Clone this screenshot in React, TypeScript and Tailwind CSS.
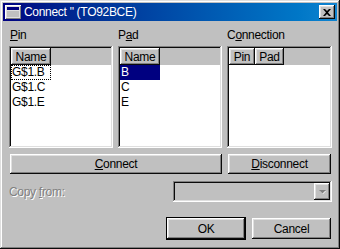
const font = "font-['Liberation_Sans',Arial,sans-serif] text-[12px] tracking-[-0.3px] text-black";

const raised =
  "bg-[#c0c0c0] shadow-[inset_-1px_-1px_#0a0a0a,inset_1px_1px_#ffffff,inset_-2px_-2px_#808080,inset_2px_2px_#dfdfdf]";
const sunken =
  "shadow-[inset_-1px_-1px_#ffffff,inset_1px_1px_#808080,inset_-2px_-2px_#dfdfdf,inset_2px_2px_#0a0a0a]";

function U({ children }: { children: React.ReactNode }) {
  return <span className="underline underline-offset-[1px]">{children}</span>;
}

function WinIcon() {
  return (
    <svg width="16" height="14" viewBox="0 0 16 14" className="shrink-0">
      <rect x="0" y="0" width="16" height="14" fill="#ffffff" />
      <rect x="1" y="1" width="15" height="13" fill="#808080" />
      <rect x="1" y="1" width="14" height="12" fill="#dfdfdf" />
      <rect x="2" y="2" width="12" height="3" fill="#000080" />
      <rect x="2" y="6" width="12" height="6" fill="#c0c0c0" />
    </svg>
  );
}

function CloseBtn() {
  return (
    <div className={`${raised} w-[16px] h-[14px] flex items-center justify-center`}>
      <svg width="8" height="7" viewBox="0 0 8 7">
        <path d="M0 0h2l2 2 2-2h2L5 3.5 8 7H6L4 5 2 7H0l3-3.5z" fill="#000" />
      </svg>
    </div>
  );
}

function Header({ w, children }: { w: number; children: React.ReactNode }) {
  return (
    <div
      className={`${raised} h-[17px] flex items-center justify-center shrink-0`}
      style={{ width: w }}
    >
      {children}
    </div>
  );
}

function ListBox({
  width,
  headers,
  children,
}: {
  width: number;
  headers: [string, number][];
  children?: React.ReactNode;
}) {
  return (
    <div className={`${sunken} bg-white h-[102px] p-[2px]`} style={{ width }}>
      <div className="flex bg-[#c0c0c0] h-[17px]">
        {headers.map(([h, w]) => (
          <Header key={h} w={w}>
            {h}
          </Header>
        ))}
      </div>
      <div className="flex flex-col">{children}</div>
    </div>
  );
}

function Btn({
  w,
  children,
  className = "",
}: {
  w: number;
  children: React.ReactNode;
  className?: string;
}) {
  return (
    <div
      className={`${raised} h-[20px] flex items-center justify-center ${className}`}
      style={{ width: w }}
    >
      {children}
    </div>
  );
}

export default function App() {
  return (
    <div
      className={`${font} w-[340px] h-[249px] bg-[#c0c0c0] p-[3px] flex flex-col shadow-[inset_-1px_-1px_#0a0a0a,inset_1px_1px_#dfdfdf,inset_-2px_-2px_#808080,inset_2px_2px_#ffffff]`}
    >
      {/* title bar */}
      <div className="h-[18px] flex items-center bg-linear-to-r from-[#000080] to-[#1084d0] pl-[2px] pr-[2px]">
        <WinIcon />
        <span className="ml-[3px] text-white text-[12px] leading-none">
          Connect " (TO92BCE)
        </span>
        <div className="ml-auto">
          <CloseBtn />
        </div>
      </div>

      <div className="flex flex-col pl-[6px] pt-[7px]">
        {/* labels */}
        <div className="flex h-[14px] leading-[14px] mb-[4px]">
          <div className="w-[109px] pl-[1px]">
            <U>P</U>in
          </div>
          <div className="w-[109px]">
            P<U>a</U>d
          </div>
          <div>
            C<U>o</U>nnection
          </div>
        </div>

        {/* lists */}
        <div className="flex gap-[5px]">
          <ListBox width={104} headers={[["Name", 40]]}>
            <div className="w-[40px] h-[15px] leading-[13px] border border-dotted border-black pl-[0px]">
              G$1.B
            </div>
            <div className="h-[15px] leading-[15px] pl-[1px]">G$1.C</div>
            <div className="h-[15px] leading-[15px] pl-[1px]">G$1.E</div>
          </ListBox>
          <ListBox width={104} headers={[["Name", 40]]}>
            <div className="w-[40px] h-[15px] leading-[15px] bg-[#000080] text-white pl-[1px]">
              B
            </div>
            <div className="h-[15px] leading-[15px] pl-[1px]">C</div>
            <div className="h-[15px] leading-[15px] pl-[1px]">E</div>
          </ListBox>
          <ListBox
            width={105}
            headers={[
              ["Pin", 26],
              ["Pad", 29],
            ]}
          />
        </div>

        {/* connect / disconnect */}
        <div className="flex mt-[6px] ml-[1px]">
          <Btn w={212}>
            <span>
              <U>C</U>onnect
            </span>
          </Btn>
          <Btn w={103} className="ml-[6px]">
            <span>
              <U>D</U>isconnect
            </span>
          </Btn>
        </div>

        {/* copy from */}
        <div className="flex items-center mt-[7px] h-[21px]">
          <div className="w-[164px] text-[#808080] [text-shadow:1px_1px_#ffffff]">
            Copy <U>f</U>rom:
          </div>
          <div className={`${sunken} w-[159px] h-[21px] bg-[#c0c0c0] flex justify-end items-center pr-[2px]`}>
            <div className={`${raised} w-[16px] h-[17px] flex items-center justify-center`}>
              <svg width="9" height="6" viewBox="0 0 9 6">
                <path d="M2 2h6L5 5z" fill="#ffffff" />
                <path d="M1 1h7L4.5 4.5z" fill="#808080" />
              </svg>
            </div>
          </div>
        </div>

        {/* ok / cancel */}
        <div className="flex mt-[15px] ml-[157px] items-center">
          <div className="border border-black w-[80px] h-[23px]">
            <div className={`${raised} w-full h-full flex items-center justify-center`}>
              OK
            </div>
          </div>
          <div
            className={`${raised} w-[79px] h-[21px] ml-[6px] flex items-center justify-center`}
          >
            Cancel
          </div>
        </div>
      </div>
    </div>
  );
}
